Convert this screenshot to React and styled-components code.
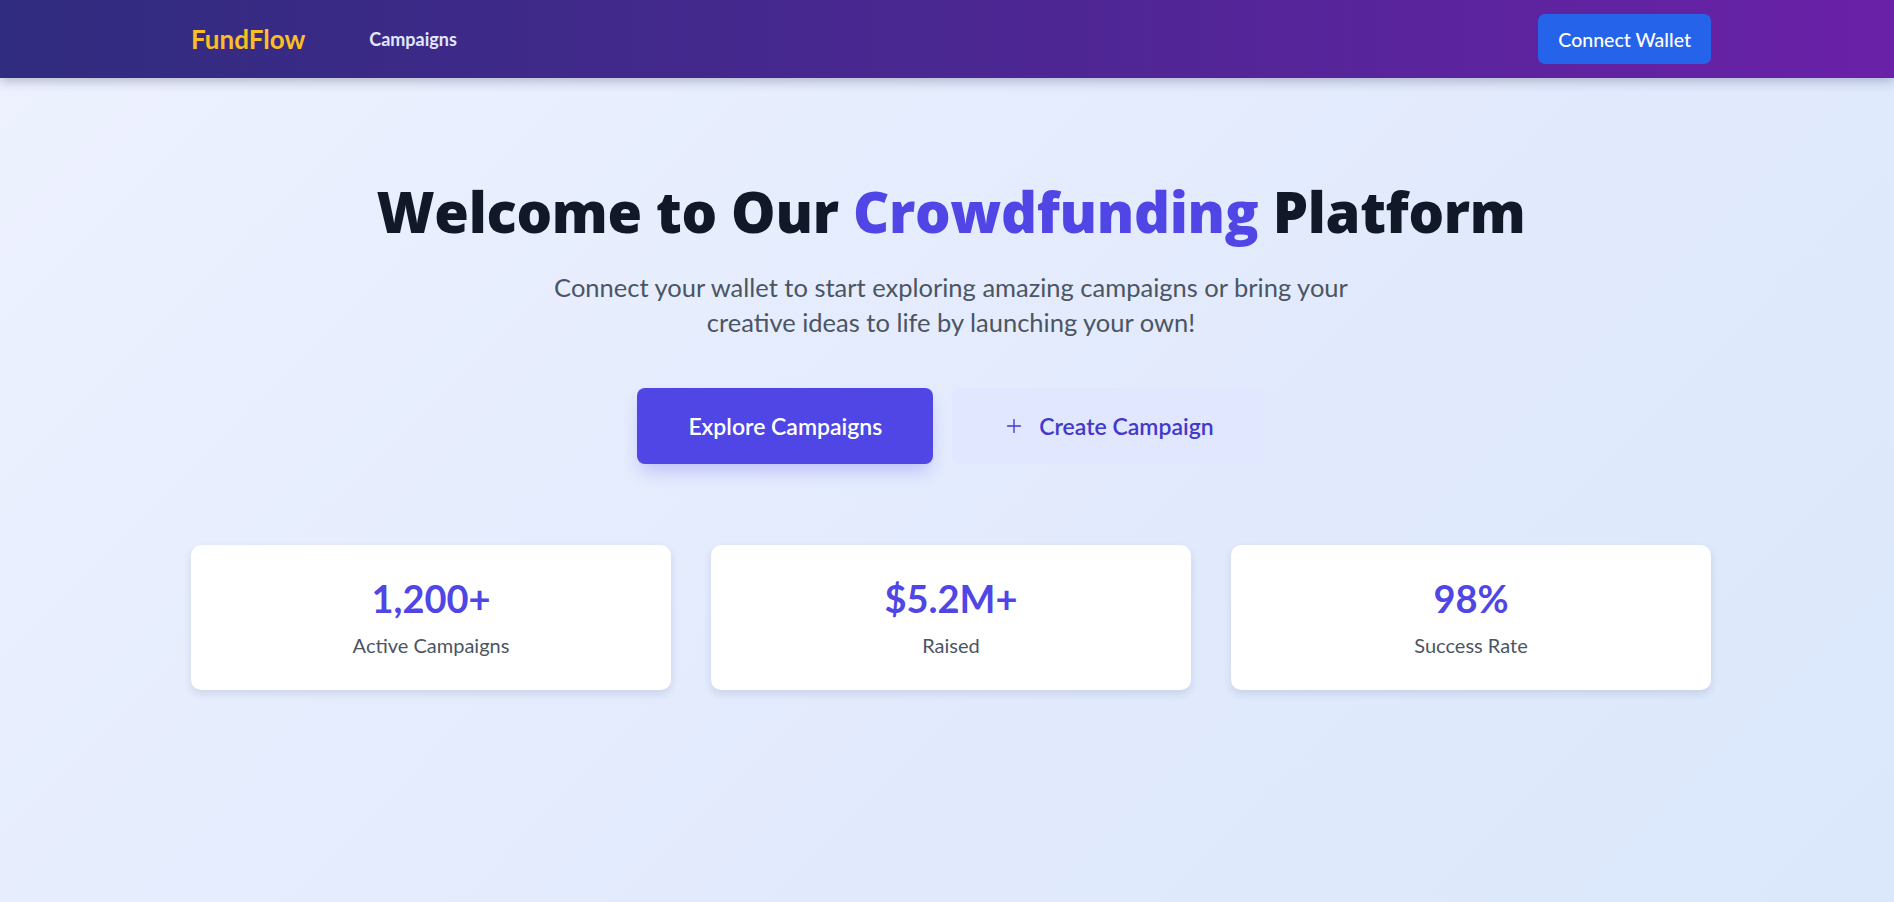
import React from "react";
import styled, { createGlobalStyle } from "styled-components";
import { Plus } from "lucide-react";

const GlobalStyle = createGlobalStyle`
  * { box-sizing: border-box; }
  html, body { margin: 0; padding: 0; }
  body {
    font-family: "Lato", "Open Sans", sans-serif;
    color: #111827;
  }
`;

const Page = styled.div`
  min-height: 100vh;
  padding-left: 8px;
  background: linear-gradient(135deg, #eef2ff 0%, #e3ebfd 50%, #dbe8fb 100%);
`;

const Header = styled.header`
  height: 78px;
  margin-left: -8px;
  padding-left: 8px;
  background: linear-gradient(90deg, #302c7f 0%, #4a2791 50%, #6a21a8 100%);
  box-shadow: 0 4px 10px rgba(30, 27, 75, 0.25);
`;

const Container = styled.div`
  width: 1520px;
  margin: 0 auto;
`;

const HeaderInner = styled(Container)`
  height: 100%;
  display: flex;
  align-items: center;
  justify-content: space-between;
`;

const Brand = styled.div`
  display: flex;
  align-items: center;
  gap: 64px;
`;

const Logo = styled.a`
  font-size: 26px;
  font-weight: 700;
  color: #fbbf24;
  text-decoration: none;
`;

const NavLink = styled.a`
  font-size: 18px;
  font-weight: 700;
  color: #e0e7ff;
  text-decoration: none;
`;

const WalletButton = styled.button`
  height: 50px;
  padding: 0 20px;
  border: none;
  border-radius: 7px;
  background: #2563eb;
  color: #fff;
  font-family: inherit;
  font-size: 19.5px;
  font-weight: 500;
  cursor: pointer;
`;

const Hero = styled.section`
  display: flex;
  flex-direction: column;
  align-items: center;
  padding-top: 100px;
  text-align: center;
`;

const Title = styled.h1`
  margin: 0;
  font-family: "Open Sans", "Lato", sans-serif;
  font-size: 56px;
  font-weight: 800;
  line-height: 1.2;
  color: #111827;
  letter-spacing: -0.3px;
`;

const Accent = styled.span`
  color: #4f46e5;
`;

const Subtitle = styled.p`
  margin: 25px 0 0;
  max-width: 820px;
  font-size: 25.5px;
  font-weight: 400;
  line-height: 35px;
  color: #4b5563;
`;

const Actions = styled.div`
  display: flex;
  gap: 19px;
  margin-top: 48px;
`;

const ActionButton = styled.button`
  height: 76px;
  padding: 0 51px;
  border: none;
  border-radius: 8px;
  display: flex;
  align-items: center;
  gap: 14px;
  font-family: inherit;
  font-size: 23px;
  font-weight: 600;
  cursor: pointer;
  background: ${(p) => (p.$primary ? "#4f46e5" : "#e0e7ff")};
  color: ${(p) => (p.$primary ? "#ffffff" : "#4338ca")};
  box-shadow: ${(p) =>
    p.$primary ? "0 10px 18px -4px rgba(79, 70, 229, 0.28)" : "none"};
`;

const Stats = styled(Container)`
  display: grid;
  grid-template-columns: repeat(3, 1fr);
  gap: 40px;
  margin-top: 81px;
`;

const StatCard = styled.div`
  height: 145px;
  background: #ffffff;
  border-radius: 10px;
  box-shadow: 0 4px 8px rgba(30, 41, 89, 0.12);
  display: flex;
  flex-direction: column;
  align-items: center;
  justify-content: center;
  gap: 13px;
`;

const StatValue = styled.div`
  font-size: 38px;
  font-weight: 700;
  line-height: 1.1;
  color: #4f46e5;
`;

const StatLabel = styled.div`
  font-size: 20px;
  font-weight: 400;
  color: #4b5563;
`;

const stats = [
  { value: "1,200+", label: "Active Campaigns" },
  { value: "$5.2M+", label: "Raised" },
  { value: "98%", label: "Success Rate" },
];

export default function App() {
  return (
    <Page>
      <GlobalStyle />
      <Header>
        <HeaderInner>
          <Brand>
            <Logo href="#">FundFlow</Logo>
            <NavLink href="#">Campaigns</NavLink>
          </Brand>
          <WalletButton>Connect Wallet</WalletButton>
        </HeaderInner>
      </Header>
      <Hero>
        <Title>
          Welcome to Our <Accent>Crowdfunding</Accent> Platform
        </Title>
        <Subtitle>
          Connect your wallet to start exploring amazing campaigns or bring your
          creative ideas to life by launching your own!
        </Subtitle>
        <Actions>
          <ActionButton $primary>Explore Campaigns</ActionButton>
          <ActionButton>
            <Plus size={22} strokeWidth={1.5} />
            Create Campaign
          </ActionButton>
        </Actions>
      </Hero>
      <Stats>
        {stats.map((s) => (
          <StatCard key={s.label}>
            <StatValue>{s.value}</StatValue>
            <StatLabel>{s.label}</StatLabel>
          </StatCard>
        ))}
      </Stats>
    </Page>
  );
}
